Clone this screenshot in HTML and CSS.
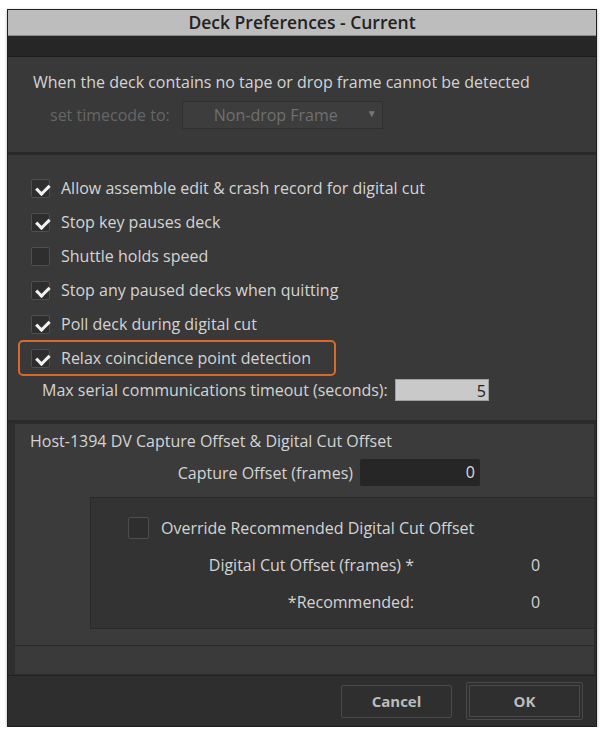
FILE: index.html
```html
<!DOCTYPE html>
<html lang="en">
<head>
  <meta charset="UTF-8" />
  <title>Deck Preferences - Current</title>
  <link rel="stylesheet" href="styles.css">
</head>
<body>

  <div class="dialog">
    <div class="titlebar">Deck Preferences - Current</div>
    <div class="band"></div>

    <div class="panel tape">
      <div class="line">When the deck contains no tape or drop frame cannot be detected</div>
      <div class="timecode">
        <span class="disabled">set timecode to:</span>
        <div class="dropdown">
          <span>Non-drop Frame</span>
          <span class="arrow">&#9660;</span>
        </div>
      </div>
    </div>

    <div class="divider"></div>

    <div class="panel options">
      <div class="row"><span class="check on"></span>Allow assemble edit &amp; crash record for digital cut</div>
      <div class="row"><span class="check on"></span>Stop key pauses deck</div>
      <div class="row"><span class="check"></span>Shuttle holds speed</div>
      <div class="row"><span class="check on"></span>Stop any paused decks when quitting</div>
      <div class="row"><span class="check on"></span>Poll deck during digital cut</div>
      <div class="row highlight"><span class="check on"></span>Relax coincidence point detection</div>
      <div class="serial">
        Max serial communications timeout (seconds):
        <div class="field light">5</div>
      </div>
    </div>

    <div class="divider"></div>

    <div class="panel offsets">
      <div class="line">Host-1394 DV Capture Offset &amp; Digital Cut Offset</div>
      <div class="capture">
        Capture Offset (frames)
        <div class="field dark">0</div>
      </div>
      <div class="inner">
        <div class="override"><span class="check big"></span>Override Recommended Digital Cut Offset</div>
        <div class="pair"><span class="key">Digital Cut Offset (frames) *</span><span class="val">0</span></div>
        <div class="pair"><span class="key">*Recommended:</span><span class="val">0</span></div>
      </div>
      <div class="tail"></div>
    </div>

    <div class="footer">
      <button class="btn cancel">Cancel</button>
      <button class="btn ok">OK</button>
    </div>
  </div>

</body>
</html>
```

FILE: styles.css
```css
body {
  margin: 0;
  padding: 9px 3px 0 7px;
  background: #ffffff;
  font-family: 'Open Sans', sans-serif;
  font-size: 16px;
  line-height: 20px;
  color: #d4d4d4;
}

.dialog {
  width: 588px;
  height: 716px;
  border: 1px solid #1f1f1f;
  background: #2e2e2e;
  display: flex;
  flex-direction: column;
  box-shadow: 0 1px 3px rgba(0, 0, 0, 0.3);
}

.titlebar {
  height: 25px;
  line-height: 25px;
  background: #bdbdbd;
  color: #222;
  text-align: center;
  font-size: 17.5px;
  font-weight: 600;
  border-bottom: 1px solid #8a8a8a;
}

.band {
  height: 20px;
  background: #262626;
  border-bottom: 1px solid #1c1c1c;
}

.panel {
  background: #393939;
}

.divider {
  height: 3px;
  background: #2a2a2a;
}

/* tape section */
.tape {
  height: 95px;
  padding: 15px 0 0 25px;
  box-sizing: border-box;
}

.timecode {
  display: flex;
  align-items: center;
  gap: 12px;
  margin-top: 9px;
  padding-left: 17px;
}

.disabled {
  color: #666;
}

.dropdown {
  width: 201px;
  height: 28px;
  box-sizing: border-box;
  background: #3d3d3d;
  border: 1px solid #303030;
  color: #707070;
  display: flex;
  align-items: center;
  padding-left: 31px;
  position: relative;
}

.arrow {
  position: absolute;
  right: 5px;
  top: 1px;
  font-size: 10px;
  color: #777;
}

/* checkbox options */
.options {
  height: 265px;
  padding: 16px 0 0 10px;
  box-sizing: border-box;
}

.row {
  display: flex;
  align-items: center;
  gap: 11px;
  height: 34px;
  box-sizing: border-box;
  padding: 0 23px 0 11px;
  border: 2px solid transparent;
  width: max-content;
}

.row.highlight {
  height: 36px;
  margin-top: -1px;
  border-color: #d8692a;
  border-radius: 5px;
}

.check {
  width: 19px;
  height: 19px;
  box-sizing: border-box;
  background: #2e2e2e;
  border: 1px solid #4e4e4e;
  border-radius: 2px;
  position: relative;
}

.check.on::after {
  content: "";
  position: absolute;
  left: 3px;
  top: 1px;
  width: 10px;
  height: 6px;
  border-left: 3px solid #f2f2f2;
  border-bottom: 3px solid #f2f2f2;
  transform: rotate(-45deg) translate(-1px, 3px);
}

.check.big {
  width: 21px;
  height: 22px;
}

.serial {
  display: flex;
  align-items: center;
  gap: 7px;
  padding-left: 24px;
  margin-top: 3px;
}

.field {
  height: 22px;
  line-height: 22px;
  box-sizing: border-box;
  text-align: right;
  padding-right: 2px;
}

.field.light {
  width: 94px;
  background: #c9c9c9;
  color: #222;
  border: 1px solid #a0a0a0;
}

.field.dark {
  width: 120px;
  height: 27px;
  line-height: 27px;
  background: #262626;
  color: #ddd;
  padding-right: 5px;
  border-radius: 2px;
}

/* DV offsets */
.offsets {
  flex: 1;
  margin-left: 6px;
  margin-right: 1px;
  border: 1px solid #2c2c2c;
  background: #3b3b3b;
  padding-top: 7px;
  display: flex;
  flex-direction: column;
}

.offsets > .line {
  padding-left: 15px;
}

.capture {
  display: flex;
  align-items: center;
  justify-content: flex-end;
  gap: 7px;
  width: 465px;
  margin-top: 8px;
}

.inner {
  margin: 11px 0 0 75px;
  height: 132px;
  box-sizing: border-box;
  background: #333;
  border-top: 1px solid #2a2a2a;
  border-left: 1px solid #2a2a2a;
  border-bottom: 1px solid #2a2a2a;
  padding: 19px 0 0 37px;
}

.override {
  display: flex;
  align-items: center;
  gap: 12px;
}

.pair {
  display: flex;
  margin-top: 15px;
  line-height: 22px;
}

.key {
  width: 286px;
  text-align: right;
}

.val {
  margin-left: 117px;
}

.tail {
  margin-top: auto;
  height: 28px;
  border-top: 1px solid #2a2a2a;
  background: #3a3a3a;
}

/* footer buttons */
.footer {
  height: 50px;
  background: #2e2e2e;
  border-top: 1px solid #222;
  display: flex;
  justify-content: flex-end;
  align-items: center;
  gap: 14px;
  padding-right: 13px;
}

.btn {
  font-family: 'Open Sans', sans-serif;
  font-size: 15px;
  font-weight: 700;
  color: #bcbcbc;
  background: #2f2f2f;
  border: 1px solid #4a4a4a;
  border-radius: 2px;
}

.cancel {
  width: 111px;
  height: 33px;
}

.ok {
  width: 117px;
  height: 38px;
  outline: 1px solid #4a4a4a;
  outline-offset: -4px;
}
```
